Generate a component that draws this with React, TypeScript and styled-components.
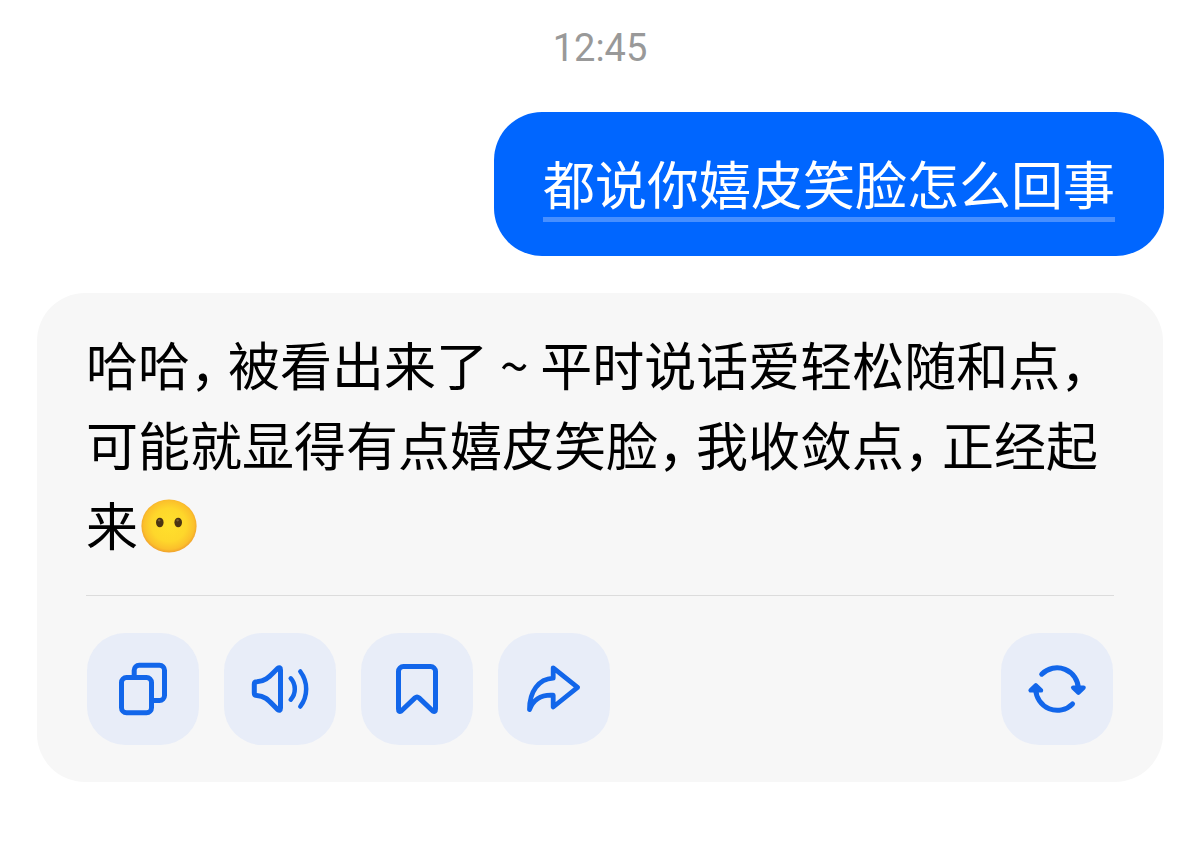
import React from "react";
import styled, { createGlobalStyle } from "styled-components";

const GlobalStyle = createGlobalStyle`
  *, *::before, *::after { box-sizing: border-box; }
  body {
    margin: 0;
    background: #ffffff;
    color: #000000;
    font-family: "Noto Sans CJK SC", "Noto Sans", sans-serif;
  }
`;

const Chat = styled.main`
  display: flex;
  flex-direction: column;
  padding: 24px 36px 60px;
`;

const Timestamp = styled.time`
  align-self: center;
  color: #999999;
  font-family: Roboto, sans-serif;
  font-size: 38px;
  line-height: 48px;
`;

const UserBubble = styled.p`
  align-self: flex-end;
  margin: 40px 0 0;
  padding: 31px 49px 33px;
  border-radius: 48px;
  background: #0066ff;
  color: #ffffff;
  font-size: 52px;
  line-height: 80px;
`;

const Underlined = styled.span`
  text-decoration: underline;
  text-decoration-color: #478fff;
  text-decoration-thickness: 5px;
  text-underline-offset: 12px;
  text-decoration-skip-ink: none;
`;

const ReplyCard = styled.article`
  margin: 37px 1px 0;
  padding: 31px 49px 37px;
  border-radius: 48px;
  background: #f7f7f7;
`;

const ReplyText = styled.p`
  margin: 0;
  font-size: 52px;
  line-height: 80px;
`;

const Comma = styled.span`
  padding-right: 12px;
  font-feature-settings: "halt";
`;

const Emoji = styled.svg`
  width: 56px;
  height: 54px;
  margin-left: 3px;
  vertical-align: -7px;
`;

const Toolbar = styled.div`
  display: flex;
  gap: 25px;
  margin-top: 31px;
  padding: 37px 1px 0;
  border-top: 1px solid #dcdcdc;
`;

const ToolButton = styled.button<{ $end?: boolean }>`
  width: 112px;
  height: 112px;
  margin: 0;
  margin-left: ${(p) => (p.$end ? "auto" : "0")};
  padding: 0;
  border: 0;
  border-radius: 38px;
  background: #e8edf8;
  color: #1266ea;
  cursor: pointer;
`;

const Icon = styled.svg`
  display: block;
  width: 100%;
  height: 100%;
  fill: none;
  stroke: currentColor;
  stroke-width: 5;
  stroke-linecap: round;
  stroke-linejoin: round;
`;

const CopyIcon = () => (
  <Icon viewBox="0 0 112 112" aria-hidden="true">
    <rect x="34.5" y="44.5" width="30" height="35.3" rx="5" />
    <path strokeLinecap="butt" d="M47.2 44V37.2a5 5 0 0 1 5-5H72.5a5 5 0 0 1 5 5V62.5a5 5 0 0 1-5 5H65" />
  </Icon>
);

const SpeakerIcon = () => (
  <Icon viewBox="0 0 112 112" aria-hidden="true">
    <path d="M30.3 51.2Q30.3 48.7 32.8 48.7C42.5 48.4 46.5 42 53.5 35.6Q56.5 33.4 56.5 37V75Q56.5 78.6 53.5 76.4C46.5 70 42.5 62.8 32.8 62.4Q30.3 62.4 30.3 59.9Z" />
    <path strokeWidth="4.5" d="M66.7 45.3A16 16 0 0 1 66.7 66.7" />
    <path strokeWidth="4.5" d="M76.3 38.5A29 29 0 0 1 76.3 73.5" />
  </Icon>
);

const BookmarkIcon = () => (
  <Icon viewBox="0 0 112 112" aria-hidden="true">
    <path d="M42.5 33.6H69.5a5 5 0 0 1 5 5V76Q74.5 79.4 71.8 78L58 64.9Q56 63.1 54 64.9L40.2 78Q37.5 79.4 37.5 76V38.6a5 5 0 0 1 5-5Z" />
  </Icon>
);

const ShareIcon = () => (
  <Icon viewBox="0 0 112 112" aria-hidden="true">
    <path strokeWidth="4.8" d="M55.2 34.8L79.6 54.4L55.2 74V62.2C43.5 61.5 35.5 66 31.5 76.6C31.5 58.5 40.5 46 55.2 45.2Z" />
  </Icon>
);

const RefreshIcon = () => (
  <Icon viewBox="0 0 112 112" aria-hidden="true">
    <path d="M40.7 41.2A21.4 21.4 0 0 1 77.4 56" />
    <path d="M71.5 70.9A21.4 21.4 0 0 1 34.8 56" />
    <path fill="currentColor" strokeWidth="4.4" d="M72.2 54.6H82.6L77.4 59.6Z" />
    <path fill="currentColor" strokeWidth="4.4" d="M29.6 57.4H40L34.8 52.4Z" />
  </Icon>
);

const NoMouthFace = () => (
  <Emoji viewBox="0 0 56 54" role="img" aria-label="😶">
    <defs>
      <radialGradient id="face" cx="0.5" cy="0.48" r="0.52">
        <stop offset="0" stopColor="#ffe02c" />
        <stop offset="0.6" stopColor="#fed72b" />
        <stop offset="0.88" stopColor="#fbc02b" />
        <stop offset="1" stopColor="#f0a02c" />
      </radialGradient>
    </defs>
    <ellipse cx="28" cy="27" rx="27.6" ry="26.6" fill="url(#face)" />
    <ellipse cx="18.8" cy="23.5" rx="3.8" ry="4.8" fill="#4b3413" />
    <ellipse cx="37.2" cy="23.5" rx="3.8" ry="4.8" fill="#4b3413" />
    <ellipse cx="18.2" cy="21.3" rx="1.3" ry="1.1" fill="#7b6038" />
    <ellipse cx="36.6" cy="21.3" rx="1.3" ry="1.1" fill="#7b6038" />
  </Emoji>
);

export default function App() {
  return (
    <>
      <GlobalStyle />
      <Chat lang="zh-CN">
        <Timestamp dateTime="12:45">12:45</Timestamp>
        <UserBubble>
          <Underlined>都说你嬉皮笑脸怎么回事</Underlined>
        </UserBubble>
        <ReplyCard>
          <ReplyText>
            哈哈<Comma>，</Comma>被看出来了 ~ 平时说话爱轻松随和点<Comma>，</Comma>可能就显得有点嬉皮笑脸<Comma>，</Comma>我收敛点<Comma>，</Comma>正经起来<NoMouthFace />
          </ReplyText>
          <Toolbar>
            <ToolButton type="button" aria-label="复制"><CopyIcon /></ToolButton>
            <ToolButton type="button" aria-label="朗读"><SpeakerIcon /></ToolButton>
            <ToolButton type="button" aria-label="收藏"><BookmarkIcon /></ToolButton>
            <ToolButton type="button" aria-label="分享"><ShareIcon /></ToolButton>
            <ToolButton type="button" aria-label="重新生成" $end><RefreshIcon /></ToolButton>
          </Toolbar>
        </ReplyCard>
      </Chat>
    </>
  );
}
